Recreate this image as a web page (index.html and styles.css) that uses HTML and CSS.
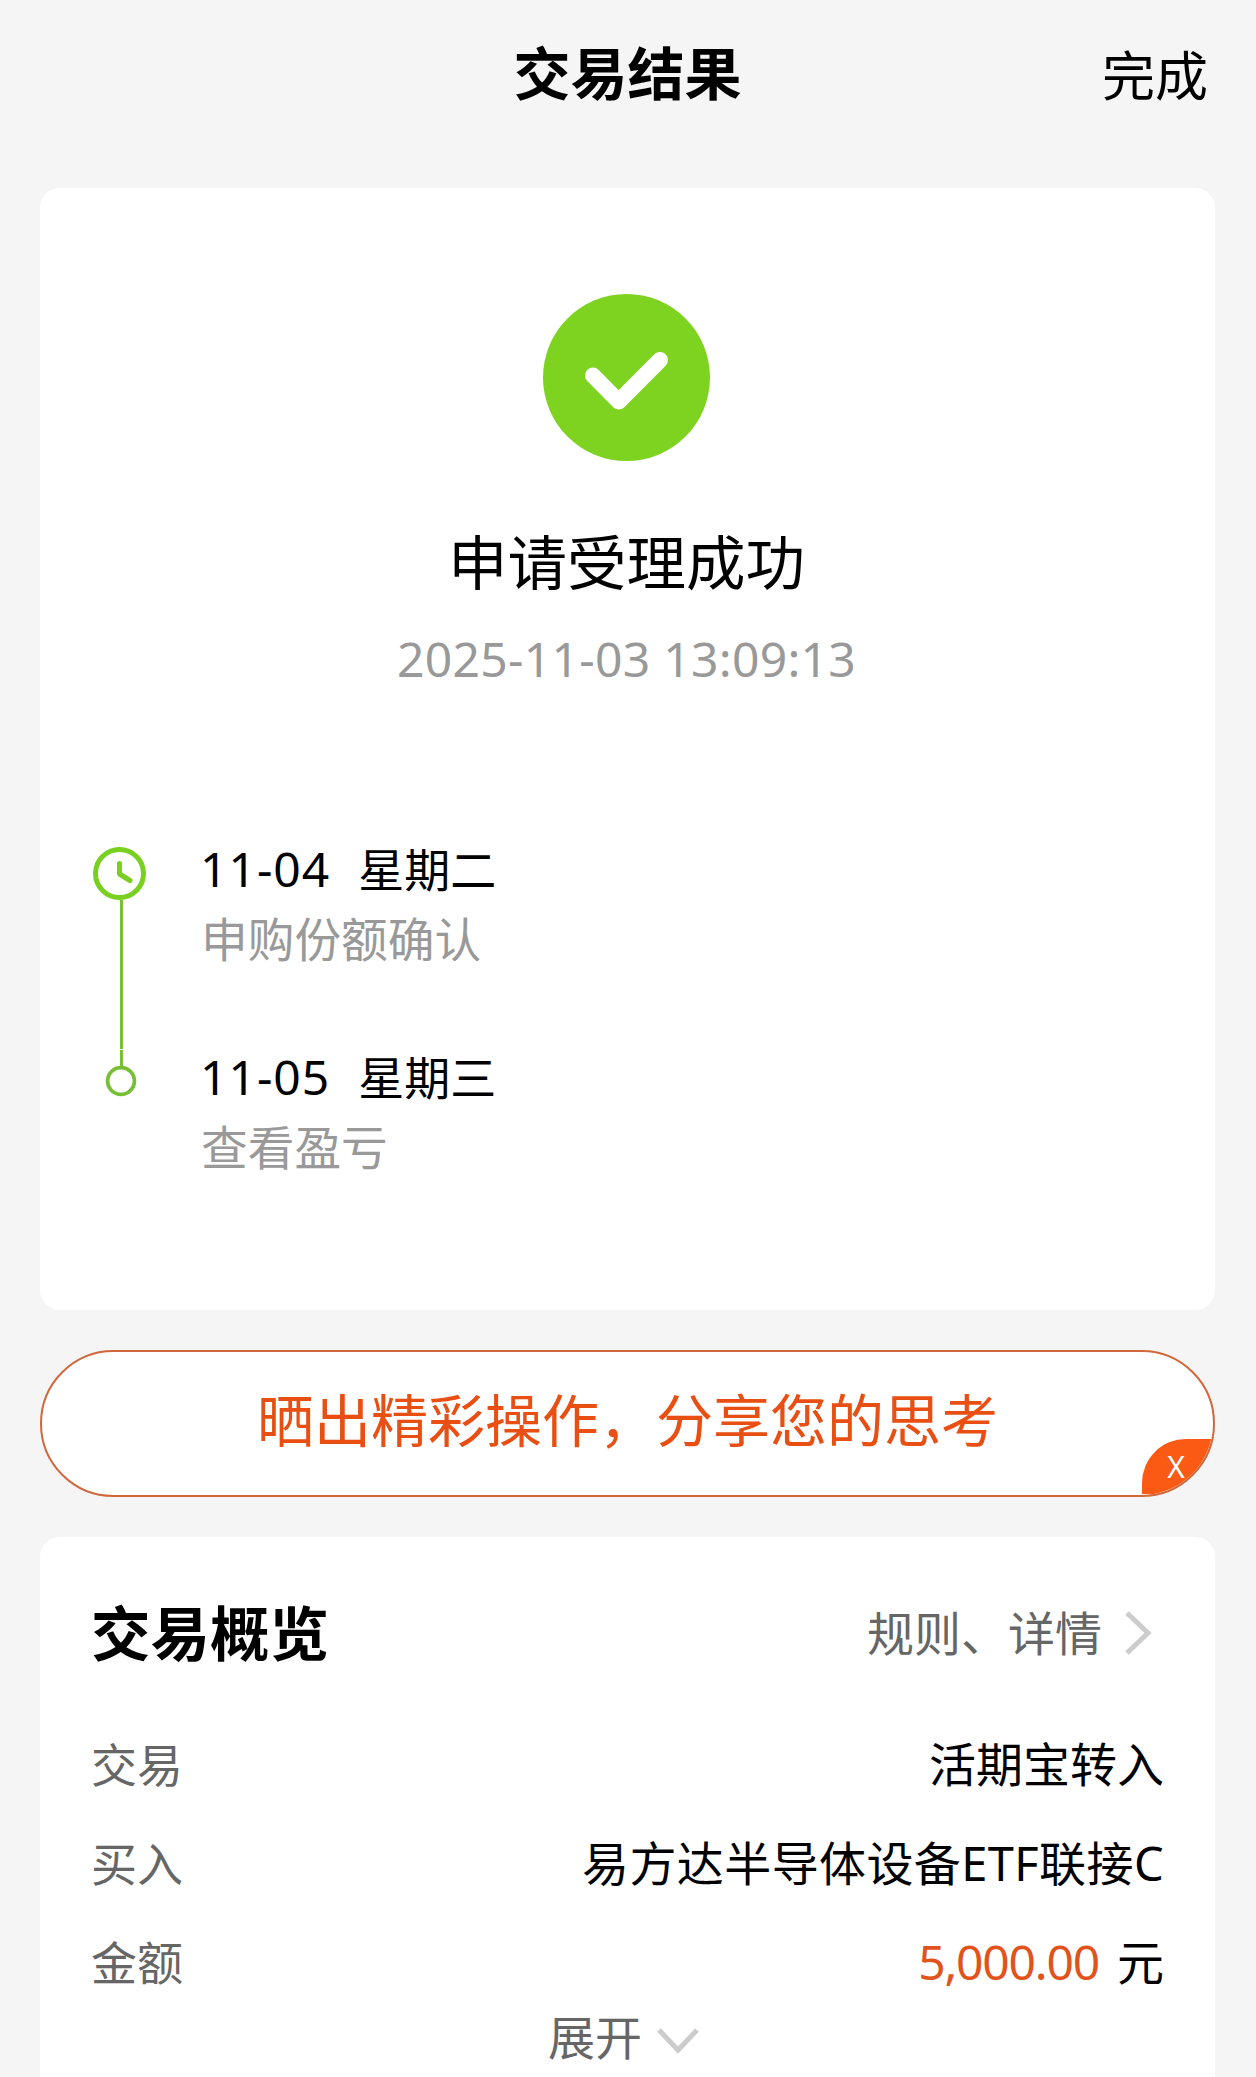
FILE: index.html
```html
<!DOCTYPE html>
<html lang="zh-CN">
<head>
    <meta charset="UTF-8">
    <meta name="viewport" content="width=device-width, initial-scale=1.0">
    <title>交易结果</title>
    <link rel="stylesheet" href="styles.css">
</head>
<body>
    <header class="topbar">
        <h1>交易结果</h1>
        <a class="done">完成</a>
    </header>

    <main>
        <section class="card result">
            <svg class="success-icon" viewBox="0 0 167 167">
                <circle cx="83.5" cy="83.5" r="83.5" fill="#7ed321"/>
                <path d="M50 81.5 L75.7 107.5 L117 66" fill="none" stroke="#fff" stroke-width="16" stroke-linecap="round" stroke-linejoin="round"/>
            </svg>
            <h2>申请受理成功</h2>
            <p class="time">2025-11-03 13:09:13</p>

            <div class="timeline">
                <svg class="track" viewBox="0 0 54 250">
                    <path d="M28.5 53 V202 M28.5 203 V220" stroke="#78bf37" stroke-width="3"/>
                    <circle cx="26.5" cy="26.5" r="24" fill="none" stroke="#79d021" stroke-width="5"/>
                    <path d="M26.5 16.5 V27 L37 33.5" fill="none" stroke="#79d021" stroke-width="5" stroke-linecap="round" stroke-linejoin="round"/>
                    <circle cx="28" cy="234" r="13.4" fill="#fff" stroke="#78bf37" stroke-width="3.8"/>
                </svg>
                <ul class="steps">
                    <li>
                        <p class="day"><span class="date">11-04</span><span>星期二</span></p>
                        <p class="desc">申购份额确认</p>
                    </li>
                    <li>
                        <p class="day"><span class="date">11-05</span><span>星期三</span></p>
                        <p class="desc">查看盈亏</p>
                    </li>
                </ul>
            </div>
        </section>

        <div class="share">
            <span>晒出精彩操作，分享您的思考</span>
            <button class="close">X</button>
        </div>

        <section class="card overview">
            <div class="overview-head">
                <h2>交易概览</h2>
                <a class="more">规则、详情
                    <svg width="28" height="44" viewBox="0 0 28 44"><path d="M3 2 L24 22 L3 42" fill="none" stroke="#ccc" stroke-width="5"/></svg>
                </a>
            </div>
            <dl>
                <div class="row"><dt>交易</dt><dd>活期宝转入</dd></div>
                <div class="row"><dt>买入</dt><dd class="fund">易方达半导体设备ETF联接C</dd></div>
                <div class="row"><dt>金额</dt><dd><span class="amount">5,000.00</span><span>元</span></dd></div>
            </dl>
            <div class="expand">展开
                <svg width="42" height="26" viewBox="0 0 42 26"><path d="M2 2 L21 22 L40 2" fill="none" stroke="#ccc" stroke-width="5"/></svg>
            </div>
        </section>
    </main>
</body>
</html>
```

FILE: styles.css
```css
* {
    box-sizing: border-box;
    margin: 0;
    padding: 0;
}
body {
    font-family: "Noto Sans", "Noto Sans CJK SC", sans-serif;
    font-size: 47px;
    line-height: 70px;
    background: #f5f5f5;
    color: #000;
    height: 2077px;
    overflow: hidden;
    white-space: nowrap;
}
svg {
    display: block;
    flex: none;
}
.topbar {
    display: grid;
    grid-template-columns: 1fr auto 1fr;
    align-items: center;
    height: 188px;
    padding: 0 48px 42px 47px;
}
.topbar h1 {
    grid-column: 2;
    font-size: 57px;
}
.done {
    justify-self: end;
    font-size: 53px;
    padding-top: 5px;
}
main {
    display: flex;
    flex-direction: column;
    gap: 40px;
    padding: 0 41px 0 40px;
}
.card {
    background: #fff;
    border-radius: 20px;
}
.result {
    display: flex;
    flex-direction: column;
    align-items: center;
    height: 1122px;
    padding: 106px 54px 0 52px;
}
.success-icon {
    width: 167px;
    height: 167px;
}
.result h2 {
    margin-top: 66px;
    font-size: 59.5px;
    font-weight: 400;
}
.time {
    margin-top: 27px;
    font-size: 48px;
    letter-spacing: 0.3px;
    color: #999;
}
.timeline {
    display: flex;
    gap: 54px;
    align-self: stretch;
    margin-top: 140px;
}
.track {
    width: 54px;
    height: 250px;
    margin: 13px 0 0 1px;
}
.steps {
    list-style: none;
}
.steps li {
    height: 208px;
}
.day {
    display: flex;
    gap: 28px;
    font-size: 46px;
}
.date {
    font-size: 48px;
    letter-spacing: 1px;
    margin-left: -1px;
}
.desc {
    font-size: 46.7px;
    color: #999;
}
.share {
    position: relative;
    display: flex;
    justify-content: center;
    align-items: center;
    height: 147px;
    padding-bottom: 7px;
    border: 2px solid #d0683c;
    border-radius: 74px;
    background: #fff;
    color: #e94e12;
    font-size: 57px;
    overflow: hidden;
}
/* corner button, clipped by the rounded end of the banner */
.close {
    position: absolute;
    right: 0;
    bottom: 1px;
    width: 71px;
    height: 55px;
    padding-right: 3px;
    border: none;
    border-radius: 44px 0 0 0;
    background: #fb5a14;
    color: #fff;
    font-family: inherit;
    font-size: 30px;
}
.overview {
    height: 560px;
    padding: 61px 51px 0;
}
.overview-head {
    display: flex;
    justify-content: space-between;
    align-items: center;
}
.overview-head h2 {
    font-size: 59.5px;
}
.more {
    display: flex;
    align-items: center;
    gap: 22px;
    padding-right: 12px;
    color: #666;
}
dl {
    display: flex;
    flex-direction: column;
    gap: 29px;
    margin-top: 61px;
}
.row {
    display: flex;
    justify-content: space-between;
}
dt {
    font-size: 46px;
    color: #666;
}
dd {
    display: flex;
    gap: 18px;
}
.fund {
    letter-spacing: 0.4px;
}
.amount {
    font-size: 48px;
    letter-spacing: -1.2px;
    color: #e2531c;
}
.expand {
    display: flex;
    justify-content: center;
    align-items: center;
    gap: 15px;
    margin-top: 5px;
    padding-right: 8px;
    color: #666;
}
.expand svg {
    margin-top: 7px;
}
```
